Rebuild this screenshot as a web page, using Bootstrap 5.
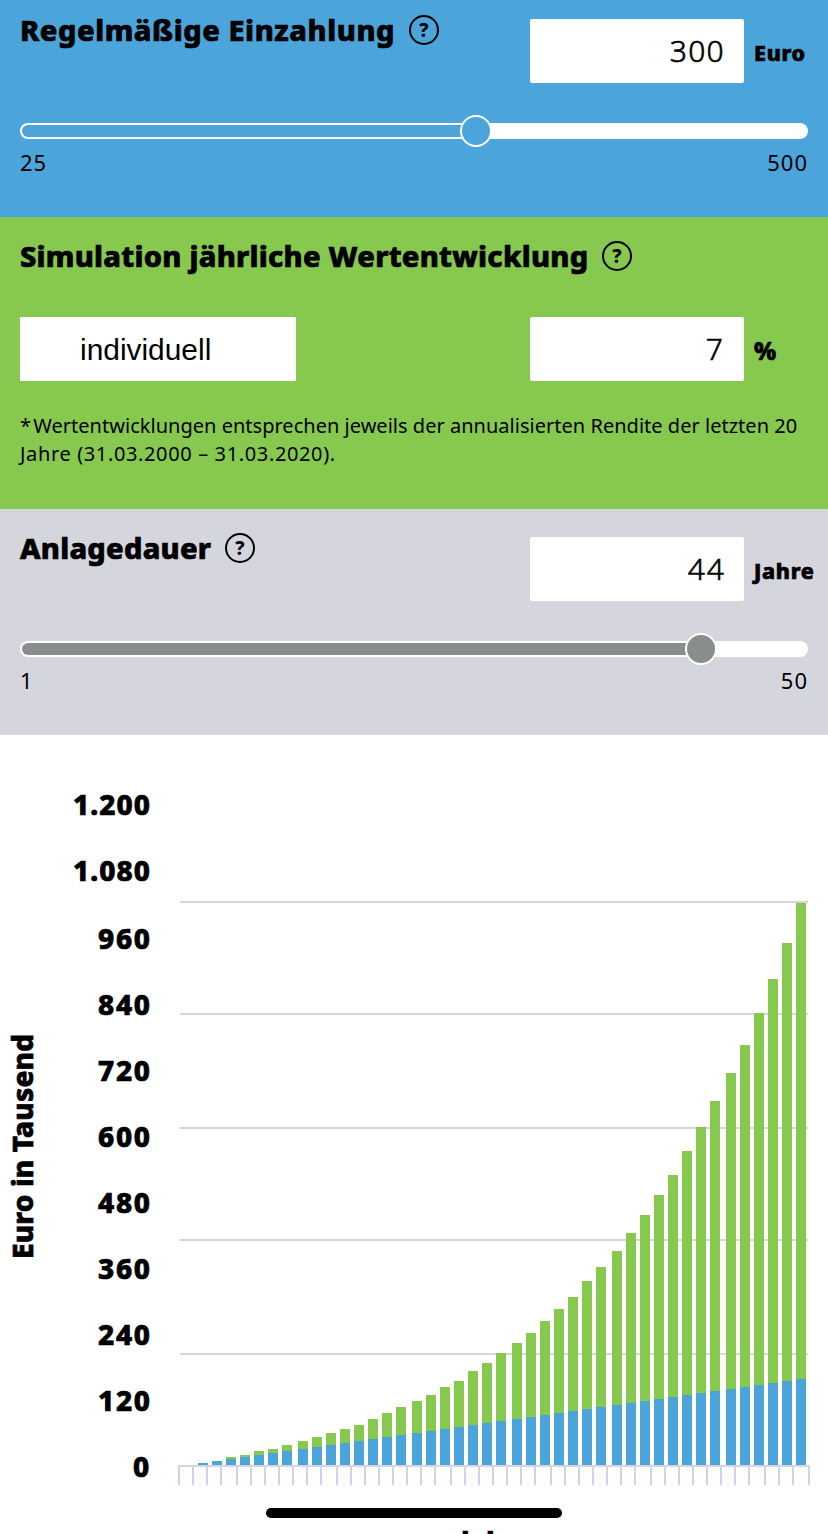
<!DOCTYPE html>
<html lang="de">
<head>
<meta charset="utf-8">
<meta name="viewport" content="width=device-width, initial-scale=1">
<title>Sparplanrechner</title>
<link href="https://cdn.jsdelivr.net/npm/bootstrap@5.3.0/dist/css/bootstrap.min.css" rel="stylesheet">
<style>
body{font-family:"Noto Sans",sans-serif;color:#000;background:#fff;width:828px;height:1534px;overflow:hidden}
.panel{padding:0 20px}
.pay{background:#4ba5db;height:217px;padding-top:19px}
.sim{background:#87c84f;height:292px;padding-top:28px}
.term{background:#d5d5de;height:226px;padding-top:28px}
.title-row{height:32px;gap:14px;margin-top:-5px}
.sim .title-row{margin-bottom:45px}
.panel-title{font-weight:800;font-size:29px;line-height:32px;margin:0;white-space:nowrap;letter-spacing:.26px;-webkit-text-stroke:.7px #000}
.pay .panel-title{letter-spacing:.55px}
.help{width:30px;height:30px;flex:none;margin-top:1px}
.help text,.axis text{font-family:"Noto Sans",sans-serif;font-weight:800}
.field{width:214px;height:64px;flex:none;border-radius:2px;background:#fff;text-align:right;padding-right:20px;font-weight:300;font-size:30px;line-height:64px;-webkit-text-stroke:.6px #000}
.pay .field{letter-spacing:1.3px;padding-right:19px}
.term .field{letter-spacing:2px;padding-right:18px}
.sim .field{padding-right:21px}
.entry{width:278px;flex:none}
.unit{font-weight:800;font-size:21.5px;line-height:30px;margin-left:10px;padding-top:4px;-webkit-text-stroke:.7px #000;letter-spacing:.7px}
.sim .unit{font-size:24px}
.choice{width:276px;height:64px;background:#fff;padding-left:60px;font:29.9px/65px "Liberation Sans",sans-serif}
.track{height:16px;border-radius:8px;background:#fff;padding:2px;position:relative}
.pay .track,.term .track{margin-top:40px}
.fill{height:12px;border-radius:6px 0 0 6px}
.knob{position:absolute;top:-8px;width:32px;height:32px;border-radius:50%;border:2px solid #fff;transform:translateX(-50%)}
.pay .fill,.pay .knob{background:#4ba5db}
.term .fill,.term .knob{background:#898d8d}
.limits{font-size:22px;line-height:30px;margin-top:8px;letter-spacing:1px}
.footnote{font-size:20px;line-height:28px;margin:31px 0 0;white-space:nowrap;letter-spacing:.02px}
.footnote .star{margin-right:-3px}
.footnote .period{letter-spacing:.63px}
.axis{display:block}
.axis .labels{font-size:28px;stroke:#000;stroke-width:.7px}
</style>
</head>
<body>
<section class="panel pay">
  <div class="d-flex justify-content-between">
    <div class="title-row d-flex"><h2 class="panel-title">Regelmäßige Einzahlung</h2>
      <svg class="help" viewBox="0 0 30 30"><circle cx="15" cy="15" r="14" fill="none" stroke="#000" stroke-width="2"/><text x="15" y="22" text-anchor="middle" font-size="19">?</text></svg></div>
    <div class="entry d-flex align-items-center"><div class="field">300</div><span class="unit">Euro</span></div>
  </div>
  <div class="track"><div class="fill" style="width:57.9%"></div><div class="knob" style="left:57.9%"></div></div>
  <div class="limits d-flex justify-content-between"><span>25</span><span>500</span></div>
</section>
<section class="panel sim">
  <div class="title-row d-flex"><h2 class="panel-title">Simulation jährliche Wertentwicklung</h2>
    <svg class="help" viewBox="0 0 30 30"><circle cx="15" cy="15" r="14" fill="none" stroke="#000" stroke-width="2"/><text x="15" y="22" text-anchor="middle" font-size="19">?</text></svg></div>
  <div class="d-flex justify-content-between">
    <div class="choice">individuell</div>
    <div class="entry d-flex align-items-center"><div class="field">7</div><span class="unit">%</span></div>
  </div>
  <p class="footnote"><span class="star">*</span> Wertentwicklungen entsprechen jeweils der annualisierten Rendite der letzten 20<br><span class="period">Jahre (31.03.2000 – 31.03.2020).</span></p>
</section>
<section class="panel term">
  <div class="d-flex justify-content-between">
    <div class="title-row d-flex"><h2 class="panel-title">Anlagedauer</h2>
      <svg class="help" viewBox="0 0 30 30"><circle cx="15" cy="15" r="14" fill="none" stroke="#000" stroke-width="2"/><text x="15" y="22" text-anchor="middle" font-size="19">?</text></svg></div>
    <div class="entry d-flex align-items-center"><div class="field">44</div><span class="unit">Jahre</span></div>
  </div>
  <div class="track"><div class="fill" style="width:86.4%"></div><div class="knob" style="left:86.4%"></div></div>
  <div class="limits d-flex justify-content-between"><span>1</span><span>50</span></div>
</section>
<svg class="axis" id="chart" width="828" height="799" viewBox="0 735 828 799">
  <g id="grid" fill="#d5d5de"></g>
  <g id="bars" shape-rendering="crispEdges"></g>
  <rect x="178" y="1465" width="632" height="2" fill="#d5d5de"/>
  <g id="ticks" fill="#ccd6eb"></g>
  <g class="labels" id="labels"></g>
  <text class="labels" transform="translate(33 1259) rotate(-90)" textLength="225">Euro in Tausend</text>
  <text class="labels" x="461 486" y="1553">ll</text>
  <rect x="266" y="1508" width="296" height="10" rx="5"/>
</svg>
<script src="https://cdn.jsdelivr.net/npm/bootstrap@5.3.0/dist/js/bootstrap.bundle.min.js"></script>
<script>
const NS='http://www.w3.org/2000/svg';
function add(parent,tag,attrs,text){
  const el=document.createElementNS(NS,tag);
  for(const k in attrs)el.setAttribute(k,attrs[k]);
  if(text)el.textContent=text;
  document.getElementById(parent).appendChild(el);
}
[901,1013,1127,1239,1353].forEach(y=>add('grid','rect',{x:180,y,width:628,height:2}));
const barX=[198,212,226,240,254,268,282,298,312,326,340,354,368,382,396,412,426,440,454,468,482,496,512,526,540,554,568,582,596,612,626,640,654,668,682,696,710,726,740,754,768,782,796];
const total=[1463,1461,1457,1455,1451,1449,1445,1441,1437,1433,1429,1425,1419,1413,1407,1401,1395,1387,1381,1371,1363,1353,1343,1333,1321,1309,1297,1281,1267,1251,1233,1215,1195,1175,1151,1127,1101,1073,1045,1013,979,943,903];
barX.forEach((x,i)=>{
  const paid=1463-2*i;
  if(total[i]<paid)add('bars','rect',{x,y:total[i],width:10,height:paid-total[i],fill:'#87c84f'});
  add('bars','rect',{x,y:paid,width:10,height:1465-paid,fill:'#4ba5db'});
});
[178,192,206,220,236,250,264,278,292,306,320,336,350,364,378,392,406,420,434,450,464,478,492,506,520,534,550,564,578,592,606,620,634,650,664,678,692,706,720,734,748,764,778,792,808]
  .forEach(x=>add('ticks','rect',{x,y:x===178||x===808?1465:1467,width:2,height:x===178||x===808?20:18}));
[['1.200',815],['1.080',881],['960',949],['840',1015],['720',1081],['600',1147],['480',1213],['360',1279],['240',1345],['120',1411],['0',1477]]
  .forEach(([t,y])=>{const w={5:77,3:52,1:17}[t.length];add('labels','text',{x:150-w,y,textLength:w},t)});
</script>
</body>
</html>
